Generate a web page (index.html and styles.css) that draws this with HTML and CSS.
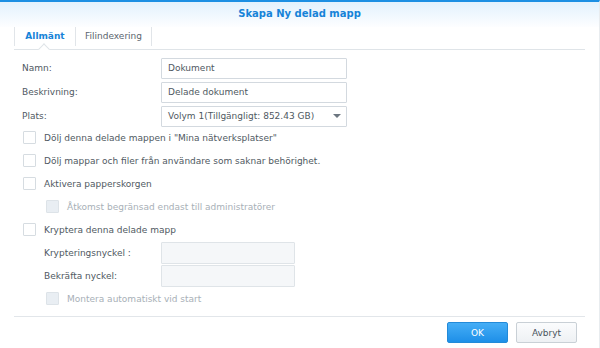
FILE: index.html
```html
<!DOCTYPE html>
<html lang="sv">
<head>
  <meta charset="UTF-8">
  <meta name="viewport" content="width=device-width, initial-scale=1.0">
  <title>Skapa Ny delad mapp</title>
  <link rel="stylesheet" href="styles.css">
</head>
<body>
  <div class="dialog">
    <div class="dialog-header">Skapa Ny delad mapp</div>

    <div class="tabs">
      <div class="tab active">Allmänt</div>
      <div class="tab">Filindexering</div>
    </div>

    <div class="dialog-body">
      <div class="field-group">
        <div class="field-row">
          <label class="field-label">Namn:</label>
          <input class="text-input" type="text" value="Dokument">
        </div>
        <div class="field-row">
          <label class="field-label">Beskrivning:</label>
          <input class="text-input" type="text" value="Delade dokument">
        </div>
        <div class="field-row">
          <label class="field-label">Plats:</label>
          <div class="select-box">
            <span>Volym 1(Tillgängligt: 852.43 GB)</span>
            <span class="select-arrow"></span>
          </div>
        </div>
      </div>

      <div class="check-group">
        <div class="check-row"><span class="checkbox"></span>Dölj denna delade mappen i "Mina nätverksplatser"</div>
        <div class="check-row"><span class="checkbox"></span>Dölj mappar och filer från användare som saknar behörighet.</div>
        <div class="check-row"><span class="checkbox"></span>Aktivera papperskorgen</div>
        <div class="check-row sub disabled"><span class="checkbox"></span>Åtkomst begränsad endast till administratörer</div>
        <div class="check-row"><span class="checkbox"></span>Kryptera denna delade mapp</div>

        <div class="field-row key-row">
          <label class="field-label">Krypteringsnyckel :</label>
          <input class="text-input key-input" type="password" disabled>
        </div>
        <div class="field-row key-row">
          <label class="field-label">Bekräfta nyckel:</label>
          <input class="text-input key-input" type="password" disabled>
        </div>
        <div class="check-row sub disabled"><span class="checkbox"></span>Montera automatiskt vid start</div>
      </div>
    </div>

    <div class="dialog-footer">
      <button class="btn btn-primary" type="button">OK</button>
      <button class="btn" type="button">Avbryt</button>
    </div>
  </div>
</body>
</html>
```

FILE: styles.css
```css
* {
  margin: 0;
  padding: 0;
  box-sizing: border-box;
}

body {
  font-family: "DejaVu Sans", Verdana, sans-serif;
  font-size: 9px;
  color: #4f5962;
  background-color: #fff;
  width: 600px;
  height: 348px;
  overflow: hidden;
}

.dialog {
  height: 348px;
  border-top: 2px solid #1c8fe3;
  border-right: 1px solid #e8ecef;
  display: flex;
  flex-direction: column;
}

.dialog-header {
  height: 25px;
  background: linear-gradient(#e2f1fd, #fdfeff);
  text-align: center;
  font-size: 10px;
  font-weight: bold;
  color: #1683d8;
  line-height: 24px;
}

.tabs {
  display: flex;
  margin: 0 14px;
  height: 23px;
  border-bottom: 1px solid #dfe4e8;
}

.tab {
  width: 61px;
  height: 19px;
  line-height: 18px;
  text-align: center;
  border-left: 1px solid #e1e5e9;
  color: #5b656e;
}

.tab + .tab {
  width: 77px;
  border-right: 1px solid #e1e5e9;
}

.tab.active {
  color: #1683d8;
  font-weight: bold;
  position: relative;
}

/* small notch under the active tab */
.tab.active::after {
  content: "";
  position: absolute;
  left: 25px;
  top: 18px;
  width: 7px;
  height: 7px;
  background: #fff;
  border-left: 1px solid #dfe4e8;
  border-top: 1px solid #dfe4e8;
  transform: rotate(45deg);
}

.dialog-body {
  padding: 6px 0 0 22px;
  flex: 1;
}

.field-row {
  display: flex;
  align-items: center;
  height: 24px;
}

.field-label {
  width: 139px;
}

.text-input,
.select-box {
  width: 186px;
  height: 21px;
  border: 1px solid #d3d9df;
  border-radius: 1px;
  padding: 0 6px;
  font-family: inherit;
  font-size: 9px;
  color: #4f5962;
  background: #fff;
}

.select-box {
  display: flex;
  align-items: center;
  justify-content: space-between;
}

.select-arrow {
  width: 0;
  height: 0;
  border-left: 4px solid transparent;
  border-right: 4px solid transparent;
  border-top: 4px solid #6c7680;
  margin-right: -1px;
}

.check-group {
  margin-top: -2px;
}

.check-row {
  display: flex;
  align-items: center;
  height: 23px;
  padding-left: 1px;
}

.checkbox {
  width: 13px;
  height: 13px;
  border: 1px solid #d6dce1;
  border-radius: 1px;
  background: #fff;
  margin-right: 8px;
}

.check-row.sub {
  padding-left: 24px;
}

.check-row.disabled {
  color: #a8b0b7;
}

.check-row.disabled .checkbox {
  background: #e9eef3;
  border-color: #dde3e8;
}

.key-row {
  padding-left: 22px;
  height: 23px;
}

.key-row .field-label {
  width: 117px;
}

.key-input {
  width: 134px;
  height: 22px;
  background: #f5f7f9;
  border-color: #dfe4e8;
}

.dialog-footer {
  margin: 0 14px 5px;
  border-top: 1px solid #e2e6ea;
  padding: 5px 8px 0 0;
  display: flex;
  justify-content: flex-end;
  gap: 8px;
}

.btn {
  width: 61px;
  height: 21px;
  border: 1px solid #c9d0d6;
  border-radius: 2px;
  background: linear-gradient(#fbfcfd, #eef1f4);
  font-family: inherit;
  font-size: 9px;
  color: #4a545d;
  cursor: pointer;
}

.btn-primary {
  border-color: #238ad8;
  background: linear-gradient(#45aef6, #1e8fe8);
  color: #fff;
}
```
